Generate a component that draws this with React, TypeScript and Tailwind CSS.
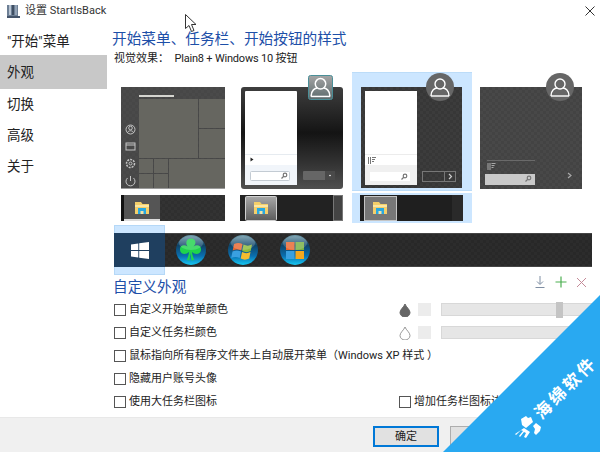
import React from 'react';

const sideItems = [
  { label: '"开始"菜单', cls: 'h-[28px] pt-[1px]' },
  { label: '外观', cls: 'h-[34px] bg-[#c8c8c8]' },
  { label: '切换', cls: 'h-[31px]' },
  { label: '高级', cls: 'h-[31px]' },
  { label: '关于', cls: 'h-[30px]' },
];

const Folder = ({ x, y }: { x: number; y: number }) => (
  <g transform={`translate(${x} ${y})`}>
    <path d="M0 1h6l1.500 2H14v10H0z" fill="#f4cf6a" />
    <rect x="0" y="4" width="14" height="2" fill="#fbe7a4" />
    <rect x="3" y="7" width="8" height="6" fill="#29a8e0" />
    <rect x="5.500" y="10" width="3" height="3" fill="#f4e3a8" />
  </g>
);

const Person = ({ cx, cy, s = 1, color = '#fff' }: { cx: number; cy: number; s?: number; color?: string }) => (
  <g transform={`translate(${cx} ${cy}) scale(${s})`} fill="none" stroke={color} strokeWidth="1.400">
    <circle cx="0" cy="-3" r="5" />
    <path d="M-9 9c0-6 4-8 6-8M9 9c0-6-4-8-6-8" />
    <path d="M-9 9h18" />
  </g>
);

const Magnifier = ({ x, y, color = '#777' }: { x: number; y: number; color?: string }) => (
  <g fill="none" stroke={color} strokeWidth="1.200">
    <circle cx={x + 1} cy={y - 1} r="1.800" />
    <path d={`M${x} ${y}l-2.500 2.500`} />
  </g>
);

const ListIcon = ({ x, y, color = '#777' }: { x: number; y: number; color?: string }) => (
  <g stroke={color} strokeWidth="1">
    <path d={`M${x} ${y}v7M${x + 2} ${y}v7M${x + 3.500} ${y + 0.500}h4M${x + 3.500} ${y + 2.500}h3M${x + 3.500} ${y + 4.500}h2`} fill="none" />
  </g>
);

const Checks = ({ id, a = '#454545', b = '#3b3b3b' }: { id: string; a?: string; b?: string }) => (
  <defs>
    <pattern id={id} width="6" height="6" patternUnits="userSpaceOnUse">
      <rect width="6" height="6" fill={a} />
      <rect width="3" height="3" fill={b} />
      <rect x="3" y="3" width="3" height="3" fill={b} />
    </pattern>
  </defs>
);

const Preview1 = () => (
  <svg width="119" height="119" viewBox="114 72 119 119">
    <Checks id="p1" a="#4a4a4a" b="#474747" />
    <rect x="121" y="87" width="104" height="102" fill="url(#p1)" />
    <rect x="121" y="188" width="104" height="1" fill="#9a9a9a" />
    <rect x="139" y="95" width="35" height="2" fill="#d5d5d0" />
    <g fill="#666660">
      <rect x="139" y="99" width="59" height="59" />
      <rect x="199" y="99" width="26" height="29" />
      <rect x="199" y="129" width="26" height="29" />
      <rect x="139" y="159" width="14" height="14" />
      <rect x="154" y="159" width="14" height="14" />
      <rect x="139" y="174" width="14" height="14" />
      <rect x="154" y="174" width="14" height="14" />
      <rect x="169" y="159" width="56" height="29" />
    </g>
    <g fill="none" stroke="#c4c4c4" strokeWidth="1">
      <circle cx="130.500" cy="129.500" r="4.500" />
      <circle cx="130.500" cy="128" r="1.800" />
      <path d="M127.500 133c0-3 6-3 6 0" />
      <rect x="126" y="143" width="9" height="7" />
      <path d="M126 145h9" />
      <circle cx="130.500" cy="163.500" r="4" strokeWidth="1.500" strokeDasharray="2 1" />
      <circle cx="130.500" cy="163.500" r="1.500" />
      <path d="M127.500 178a4.500 4.500 0 1 0 6 0M130.500 176v5" />
    </g>
  </svg>
);

const Preview2 = () => (
  <svg width="119" height="119" viewBox="233 72 119 119">
    <defs>
      <linearGradient id="p2bg" x1="0" y1="0" x2="0" y2="1">
        <stop offset="0" stopColor="#3e3e3e" />
        <stop offset="0.45" stopColor="#141414" />
        <stop offset="0.75" stopColor="#333" />
        <stop offset="1" stopColor="#505050" />
      </linearGradient>
      <linearGradient id="p2av" x1="0" y1="0" x2="0" y2="1">
        <stop offset="0" stopColor="#a5a5a5" />
        <stop offset="1" stopColor="#5b6a6c" />
      </linearGradient>
    </defs>
    <rect x="241" y="87" width="102" height="102" rx="3" fill="url(#p2bg)" />
    <rect x="245" y="91" width="52" height="94" rx="1" fill="#fff" />
    <rect x="245" y="165" width="52" height="20" fill="#f1f5fa" />
    <rect x="245" y="154" width="52" height="1" fill="#e6ebf0" />
    <path d="M250.500 157.500l3 2-3 2z" fill="#222" />
    <rect x="250.500" y="171.500" width="39" height="9" rx="1" fill="#fff" stroke="#c3cbd3" />
    <Magnifier x={284} y={176} />
    <rect x="303" y="171" width="32" height="9" rx="1" fill="#666" />
    <rect x="325" y="171" width="10" height="9" fill="#4a4a4a" />
    <circle cx="330" cy="175.500" r="0.800" fill="#fff" />
    <rect x="308.500" y="75.500" width="24" height="24" rx="2" fill="url(#p2av)" stroke="#4a8f98" />
    <Person cx={320.500} cy={87} s={1.050} />
  </svg>
);

const Preview3 = () => (
  <svg width="120" height="119" viewBox="352 72 120 119">
    <Checks id="p3" a="#3c3c3c" b="#373737" />
    <rect x="361" y="87" width="101" height="101" fill="url(#p3)" />
    <rect x="365" y="91" width="52" height="94" fill="#fff" />
    <rect x="365" y="165" width="52" height="20" fill="#f0f0f0" />
    <rect x="365" y="154" width="52" height="1" fill="#ececec" />
    <ListIcon x={368.500} y={157} />
    <rect x="370" y="172" width="40" height="9" fill="#fff" />
    <Magnifier x={404} y={177} />
    <rect x="422.500" y="171.500" width="33" height="10" fill="none" stroke="#777" />
    <path d="M444.500 171.500v10" stroke="#777" />
    <path d="M449 174l2.500 2.500-2.500 2.500" fill="none" stroke="#ccc" strokeWidth="1.200" />
    <circle cx="440" cy="87" r="14" fill="#666" />
    <Person cx={440} cy={87} />
  </svg>
);

const Preview4 = () => (
  <svg width="119" height="119" viewBox="472 72 119 119">
    <Checks id="p4" a="#484848" b="#434343" />
    <rect x="480" y="87" width="102" height="102" fill="url(#p4)" />
    <rect x="487" y="160" width="48" height="1" fill="#6a6a6a" />
    <ListIcon x={488} y={163} color="#aaa" />
    <rect x="485" y="174" width="50" height="11" fill="#c9c9c9" />
    <Magnifier x={528} y={179} />
    <path d="M568 173l3 2.500-3 2.500" fill="none" stroke="#aaa" strokeWidth="1.200" />
    <circle cx="560" cy="87" r="14" fill="#666" />
    <Person cx={560} cy={87} />
  </svg>
);

const Task1 = () => (
  <svg width="119" height="30" viewBox="114 193 119 30">
    <Checks id="t1" a="#333" b="#2f2f2f" />
    <rect x="121" y="195" width="104" height="26" fill="url(#t1)" />
    <rect x="121" y="195" width="3" height="26" fill="#111" />
    <rect x="124" y="195" width="36" height="24" fill="#555" />
    <rect x="124" y="219" width="36" height="2" fill="#ddd" />
    <Folder x={135} y={201} />
  </svg>
);

const Task2 = () => (
  <svg width="119" height="30" viewBox="233 193 119 30">
    <defs>
      <linearGradient id="t2b" x1="0" y1="0" x2="0" y2="1">
        <stop offset="0" stopColor="#a8a8a8" />
        <stop offset="1" stopColor="#5c5c5c" />
      </linearGradient>
    </defs>
    <rect x="240" y="195" width="103" height="26" fill="#222" />
    <rect x="245.500" y="196.500" width="31" height="24" rx="1" fill="url(#t2b)" stroke="#d0d0d0" />
    <Folder x={254} y={201} />
    <rect x="333.500" y="195.500" width="9" height="25" fill="#444" stroke="#777" />
  </svg>
);

const Task3 = () => (
  <svg width="120" height="30" viewBox="352 193 120 30">
    <rect x="360" y="195" width="103" height="26" fill="#1f1f1f" />
    <rect x="452" y="195" width="11" height="26" fill="#2a2a2a" />
    <rect x="364.500" y="196.500" width="32" height="24" fill="#777" stroke="#c5c5c5" />
    <Folder x={373} y={201} />
  </svg>
);

const Orb = ({ id, children }: { id: string; children: React.ReactNode }) => (
  <svg width="30" height="30" viewBox="0 0 30 30">
    <defs>
      <linearGradient id={id} x1="0" y1="0" x2="0" y2="1">
        <stop offset="0" stopColor="#6f9aa8" />
        <stop offset="0.35" stopColor="#0e4468" />
        <stop offset="0.7" stopColor="#0a6fb0" />
        <stop offset="1" stopColor="#16c8f2" />
      </linearGradient>
    </defs>
    <circle cx="15" cy="15" r="15" fill={`url(#${id})`} />
    {children}
    <ellipse cx="15" cy="8" rx="12" ry="7" fill="#fff" opacity="0.18" />
  </svg>
);

const CheckRow = ({ label }: { label: string }) => (
  <span className="flex items-center">
    <span className="w-[12px] h-[12px] border border-[#555] bg-white" />
    <span className="ml-[3px] pt-[2px] text-[11px] text-[#222] whitespace-pre">{label}</span>
  </span>
);

const ColorControls = ({ filled, thumb }: { filled: boolean; thumb?: boolean }) => (
  <span className="ml-auto flex items-center">
    <svg width="12" height="14" viewBox="0 0 12 14">
      <path
        d="M6 1C5 4 1 6.500 1 9.500a5 4.500 0 0 0 10 0C11 6.500 7 4 6 1z"
        fill={filled ? '#666' : '#fff'}
        stroke={filled ? '#666' : '#999'}
      />
    </svg>
    <span className="ml-[7px] w-[13px] h-[13px] bg-[#ececec]" />
    <span className="relative ml-[10px] w-[159px] h-[13px] bg-[#e6e6e6] border border-[#d8d8d8]">
      {thumb && <span className="absolute left-[114px] top-[-2px] w-[7px] h-[16px] bg-[#c4c4c4]" />}
    </span>
  </span>
);

export default function App() {
  return (
    <div className="relative w-[600px] h-[452px] overflow-hidden bg-white flex flex-col text-[#222] [font-family:Roboto,'Noto_Sans_CJK_SC',sans-serif]">
      {/* Title bar */}
      <div className="h-[22px] shrink-0 flex items-center pl-[7px] pr-[5px]">
        <svg width="13" height="13" viewBox="0 0 13 13">
          <rect x="0" y="0" width="11" height="11" fill="#6d7f95" />
          <rect x="2" y="0" width="2" height="10" fill="#b8c4d2" />
          <rect x="5" y="0" width="2" height="10" fill="#3f4f63" />
          <rect x="8" y="0" width="2" height="10" fill="#93a3b6" />
          <rect x="0" y="11" width="13" height="2" fill="#44546a" />
        </svg>
        <span className="ml-[5px] text-[11px] text-[#333] whitespace-nowrap">设置 StartIsBack</span>
        <svg className="ml-auto" width="10" height="10" viewBox="0 0 10 10">
          <path d="M0.500 0.500l9 9M9.500 0.500l-9 9" stroke="#333" />
        </svg>
      </div>

      <div className="flex-1 flex min-h-0">
        {/* Sidebar */}
        <div className="w-[107px] shrink-0 pt-[5px]">
          {sideItems.map((item) => (
            <div key={item.label} className={`${item.cls} flex items-center pl-[7px] text-[13.5px] text-[#222]`}>
              {item.label}
            </div>
          ))}
        </div>

        {/* Main panel */}
        <div className="flex-1 min-w-0 pl-[7px]">
          <div className="pt-[6px] -ml-[2px] h-[28px] text-[14.67px] leading-[22px] text-[#1d4fa8] whitespace-nowrap">
            开始菜单、任务栏、开始按钮的样式
          </div>
          <div className="h-[16px] mt-[1px] text-[11px] leading-[16px] whitespace-pre">
            视觉效果：  <span className="tracking-[-0.2px]">Plain8 + Windows 10 </span>按钮
          </div>

          <div className="flex mt-[5px] w-[477px] h-[119px]">
            <Preview1 />
            <Preview2 />
            <div className="bg-[#cce6ff] border-y border-[#bcdcf8] h-[119px]">
              <div className="-mt-[1px]">
                <Preview3 />
              </div>
            </div>
            <Preview4 />
          </div>
          <div className="flex mt-[2px] w-[477px] h-[30px]">
            <Task1 />
            <Task2 />
            <div className="bg-[#cce6ff] h-[30px]">
              <Task3 />
            </div>
          </div>

          {/* Start buttons */}
          <div className="flex items-center w-[478px] h-[50px] mt-[2px]">
            <div className="w-[51px] h-[50px] bg-[#cce6ff] border border-[#b5d8f7] flex items-center">
              <div className="w-[51px] h-[34px] -mx-[1px] shrink-0 bg-[#1f3f5f] flex items-center justify-center">
                <svg width="18" height="17" viewBox="0 0 18 17">
                  <path d="M0 2.400l7.300-1v6.700H0zM8.200 1.300L18 0v8.100H8.200zM0 9h7.300v6.600L0 14.600zM8.200 9H18v8l-9.800-1.300z" fill="#fff" />
                </svg>
              </div>
            </div>
            <div className="flex-1 h-[34px] flex items-center gap-[22px] pl-[11px] border-y border-[#444] bg-[repeating-conic-gradient(#2c2c2c_0_25%,#282828_0_50%)] bg-[length:6px_6px]">
              <Orb id="orb1">
                <path
                  d="M15 3.500c-4.500 0-6 4.500-3.500 8C8 9 3.500 10.500 4 15c.5 4.500 6 5 9 2-.3 3-1 5.500-2.300 8l2.800.5c.5-3 1-6 .5-8.500.5 2.500 1 5.500 1.500 8.500l2.800-.5c-1.300-2.500-2-5-2.300-8 3 3 8.500 2.500 9-2 .5-4.500-4-6-7.500-3.500C21 8 19.500 3.500 15 3.500z"
                  fill="#1fd44c"
                />
              </Orb>
              <Orb id="orb2">
                <path d="M6 9c3-1.500 5.500-1.500 8.500 0l-1.300 6.500c-3-1.500-5.500-1.500-8.500 0z" fill="#e8662f" />
                <path d="M15.500 9.500c3 1.500 5.500 1.500 8.500 0l-1.300 6.500c-3 1.500-5.500 1.500-8.500 0z" fill="#8dbb3a" />
                <path d="M4.500 16.500c3-1.500 5.500-1.500 8.500 0l-1.300 6.500c-3-1.500-5.500-1.500-8.500 0z" fill="#3aa0e0" />
                <path d="M14 17c3 1.500 5.500 1.500 8.500 0l-1.300 6.500c-3 1.500-5.500 1.500-8.500 0z" fill="#f4bc2e" />
              </Orb>
              <Orb id="orb3">
                <rect x="6" y="7" width="8.500" height="8" fill="#e8662f" />
                <rect x="15.500" y="7" width="8.500" height="8" fill="#76b043" />
                <rect x="6" y="16" width="8.500" height="8" fill="#3aa0e0" />
                <rect x="15.500" y="16" width="8.500" height="8" fill="#f4a81e" />
              </Orb>
            </div>
          </div>

          {/* Custom appearance */}
          <div className="flex items-start w-[486px] h-[22px] mt-[1px] -ml-[1px]">
            <span className="text-[14.67px] leading-[22px] text-[#1d4fa8] whitespace-nowrap">自定义外观</span>
            <span className="ml-auto mr-[12px] flex items-center gap-[9px]">
              <svg width="12" height="12" viewBox="0 0 12 12" fill="none" stroke="#7f8ea3">
                <path d="M6 0v8M3 5.500L6 8.500l3-3M1.500 11.500h9" />
              </svg>
              <svg width="12" height="12" viewBox="0 0 12 12" fill="none" stroke="#4caf50" strokeWidth="1.200">
                <path d="M6 0.500v11M0.500 6h11" />
              </svg>
              <svg width="11" height="11" viewBox="0 0 11 11" fill="none" stroke="#c48a98">
                <path d="M1 1l9 9M10 1l-9 9" />
              </svg>
            </span>
          </div>
          <div className="flex items-center h-[23px] w-[486px]">
            <CheckRow label="自定义开始菜单颜色" />
            <ColorControls filled thumb />
          </div>
          <div className="flex items-center h-[23px] w-[486px]">
            <CheckRow label="自定义任务栏颜色" />
            <ColorControls filled={false} />
          </div>
          <div className="flex items-center h-[23px] w-[486px]">
            <CheckRow label="鼠标指向所有程序文件夹上自动展开菜单（Windows XP 样式 ）" />
          </div>
          <div className="flex items-center h-[23px] w-[486px]">
            <CheckRow label="隐藏用户账号头像" />
          </div>
          <div className="flex items-center h-[23px] w-[486px]">
            <CheckRow label="使用大任务栏图标" />
            <span className="ml-[182px]">
              <CheckRow label="增加任务栏图标边距" />
            </span>
          </div>
        </div>
      </div>

      {/* Footer */}
      <div className="h-[35px] shrink-0 bg-[#f0f0f0] border-t border-[#e8e8e8] pt-[8px] flex justify-end gap-[11px] pr-[84px]">
        <button className="w-[66px] h-[21px] border-2 border-[#0078d7] bg-[#e1e1e1] text-[11px] leading-none text-[#222]">确定</button>
        <button className="w-[66px] h-[21px] border border-[#adadad] bg-[#e1e1e1] text-[11px] leading-none text-[#222]">取消</button>
      </div>

      {/* Mouse pointer */}
      <svg className="absolute left-[185px] top-[14px]" width="12" height="19" viewBox="0 0 12 19">
        <path d="M0.500 0.500v14l3.500-3 2.500 6 2.500-1-2.500-6h4.500z" fill="#fff" stroke="#333" />
      </svg>

      {/* Watermark */}
      <div className="absolute right-0 bottom-0 w-[157px] h-[157px] bg-[#29a9f1] [clip-path:polygon(100%_0,100%_100%,0_100%)]">
        <span className="absolute left-[123px] top-[93px] -translate-x-1/2 -translate-y-1/2 -rotate-45 text-[17px] leading-none tracking-[3px] font-bold text-white whitespace-nowrap">
          海绵软件
        </span>
        <svg className="absolute left-[66px] top-[118px]" width="34" height="30" viewBox="0 0 34 30" fill="#fff">
          <path d="M12 6l5-3 2 2 3-1 2 5-7 6-4-3z" />
          <path d="M24 13l3-3 5 4-1 4-4 4-2-2 1-4z" />
          <path d="M15 15l6 4-4 6-2-1 2-4-2-1-4 5-1-1 4-5-2-1-5 5-1-1z" />
        </svg>
      </div>
    </div>
  );
}
